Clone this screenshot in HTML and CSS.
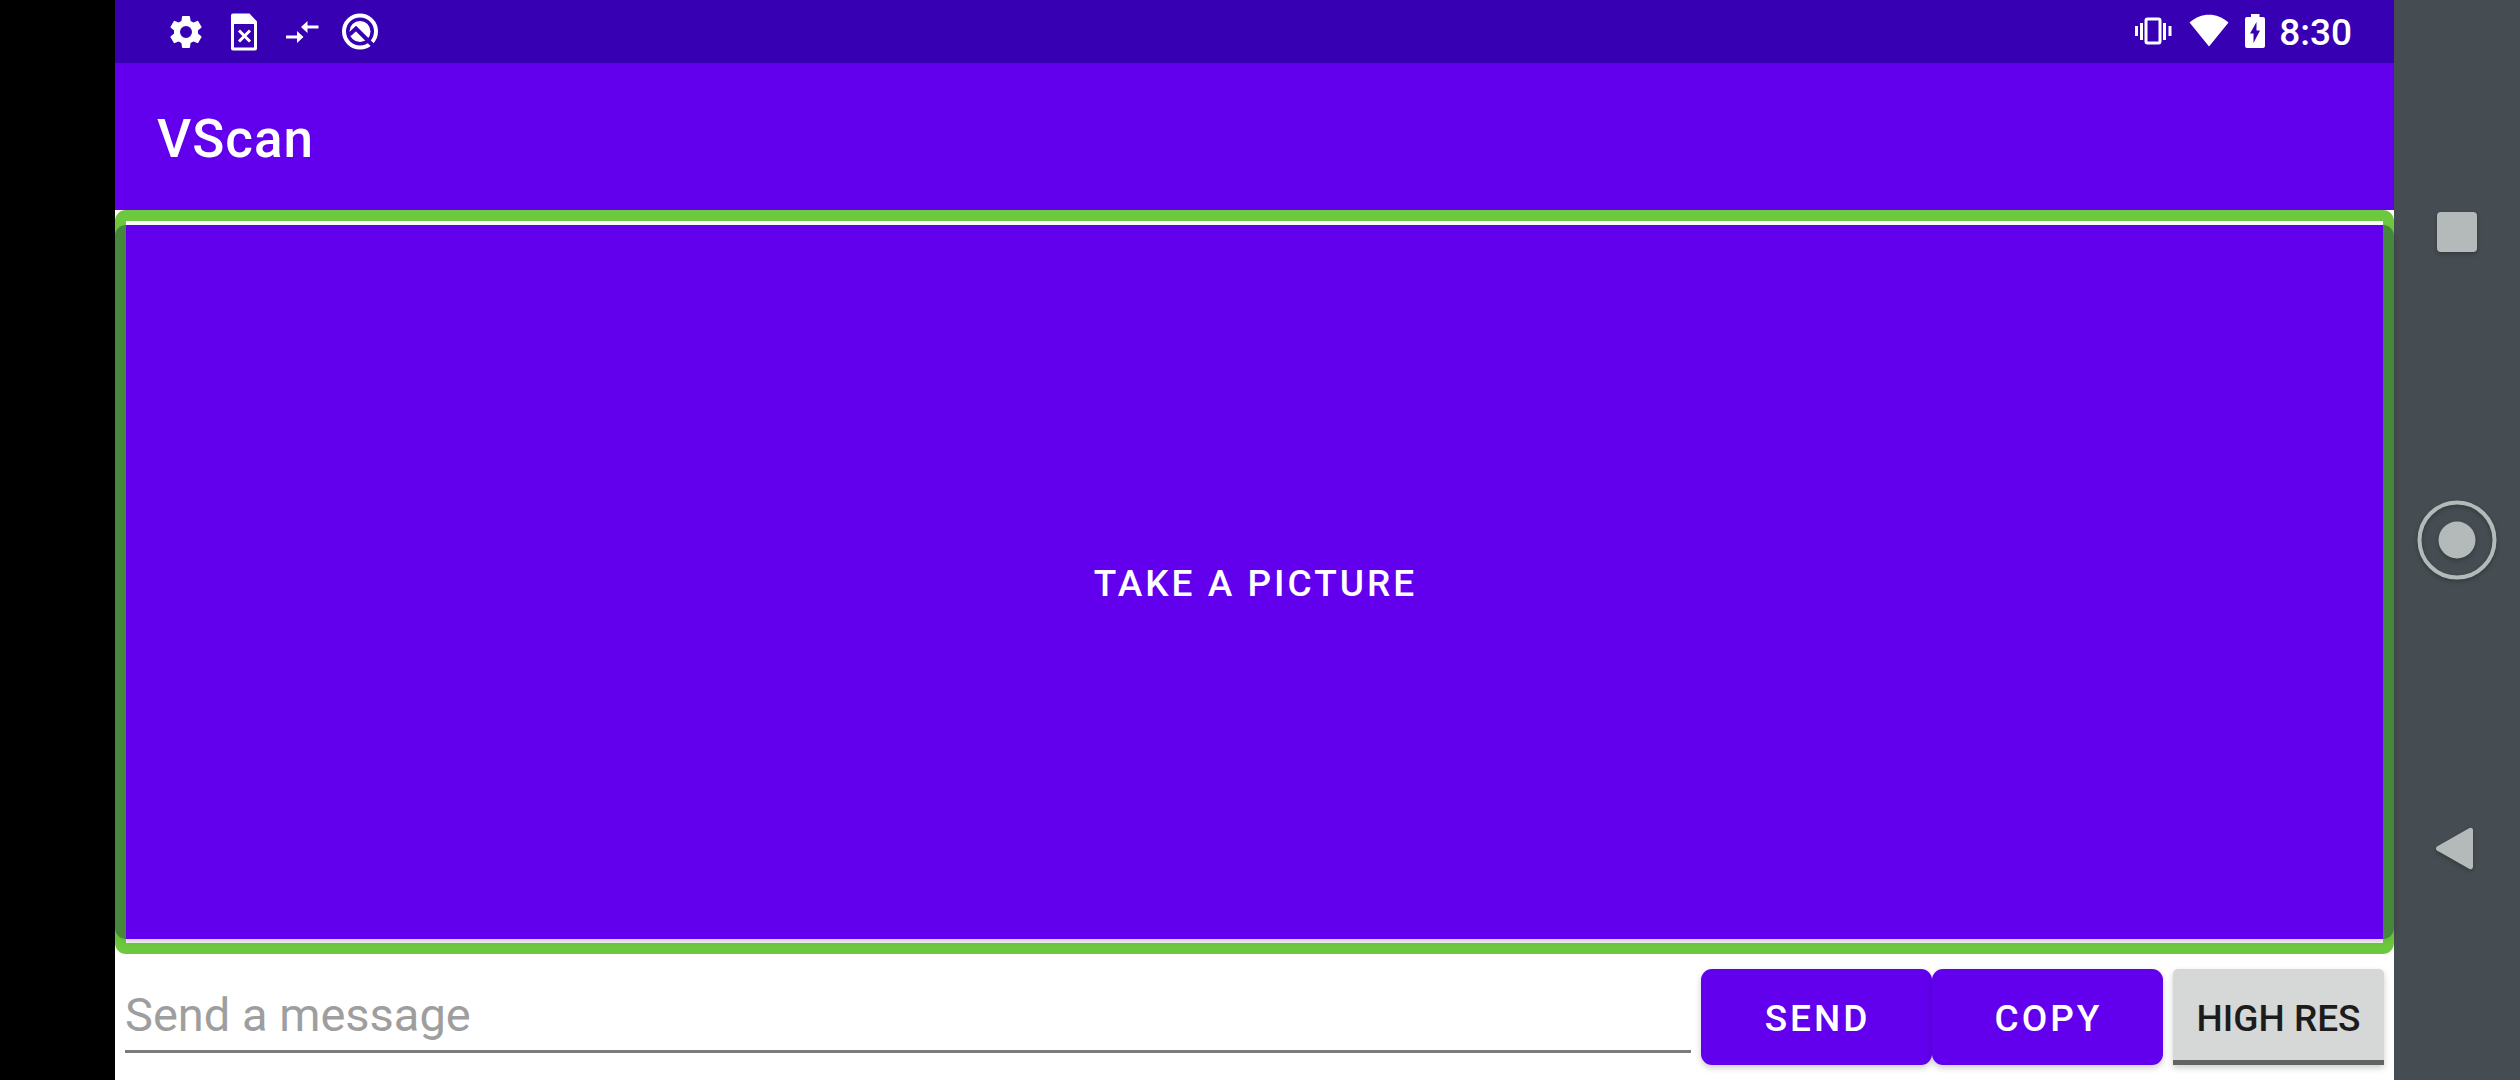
FILE: index.html
```html
<!DOCTYPE html>
<html lang="en">
<head>
<meta charset="utf-8">
<title>VScan</title>
<link rel="stylesheet" href="styles.css">
</head>
<body>
<div class="device">
  <main class="app">
    <div class="status-bar">
      <div class="status-group">
        <svg class="icon" viewBox="0 0 24 24" aria-hidden="true"><path d="M19.14 12.94c.04-.3.06-.61.06-.94s-.02-.64-.07-.94l2.03-1.58a.49.49 0 0 0 .12-.61l-1.92-3.32a.49.49 0 0 0-.59-.22l-2.39.96c-.5-.38-1.03-.7-1.62-.94l-.36-2.54a.48.48 0 0 0-.48-.41h-3.84c-.24 0-.43.17-.47.41l-.36 2.54c-.59.24-1.13.57-1.62.94l-2.39-.96a.48.48 0 0 0-.59.22L2.74 8.87c-.12.21-.08.47.12.61l2.03 1.58c-.05.3-.09.63-.09.94s.02.64.07.94l-2.03 1.58a.49.49 0 0 0-.12.61l1.92 3.32c.12.22.37.29.59.22l2.39-.96c.5.38 1.03.7 1.62.94l.36 2.54c.05.24.24.41.48.41h3.84c.24 0 .44-.17.47-.41l.36-2.54c.59-.24 1.13-.56 1.62-.94l2.39.96c.22.08.47 0 .59-.22l1.92-3.32a.48.48 0 0 0-.12-.61zM12 15.6a3.6 3.6 0 1 1 0-7.2 3.6 3.6 0 0 1 0 7.2z"/></svg>
        <svg class="icon" viewBox="0 0 40 40" aria-hidden="true"><path fill-rule="evenodd" d="M9 1.500h16.500l7.500 8v27a2 2 0 0 1-2 2H9a2 2 0 0 1-2-2v-33a2 2 0 0 1 2-2zM10 12v23.500h20V12z"/><path class="line" d="M15 18.500l11 11M26 18.500l-11 11"/></svg>
        <svg class="icon" viewBox="0 0 40 40" aria-hidden="true"><path d="M4 23.500h11V19l6.500 6-6.500 6v-4.500H4zM36.500 13.500h-11V9L19 15l6.500 6v-4.500h11z"/></svg>
        <svg class="icon" viewBox="0 0 40 40" aria-hidden="true"><circle class="ring" cx="20" cy="19.500" r="16"/><circle cx="20" cy="19.500" r="10.500"/><path class="cut" d="M9.500 22.500l6.500-6 18 18"/></svg>
      </div>
      <div class="status-group status-right">
        <svg class="icon" viewBox="0 0 40 40" aria-hidden="true"><rect class="phone" x="13" y="7" width="14" height="24" rx="1.500"/><path d="M2 14h3v10H2zM7 11h3v17H7zM30 11h3v17h-3zM35.500 14h3v10h-3z"/></svg>
        <svg class="icon wifi" viewBox="0 0 40 40" aria-hidden="true"><path d="M.500 10.500C12 0 28 0 39.500 10.500L20 34.500z"/></svg>
        <svg class="battery" viewBox="0 0 20 40" aria-hidden="true"><path fill-rule="evenodd" d="M6 2h8.500v3H18a2 2 0 0 1 2 2v27a2 2 0 0 1-2 2H2a2 2 0 0 1-2-2V7a2 2 0 0 1 2-2h4zM11.500 10L5 21.500h3.500V31L15 18.500h-3.500z"/></svg>
        <time class="clock">8:30</time>
      </div>
    </div>
    <header class="toolbar"><h1>VScan</h1></header>
    <section class="preview"><button class="button capture" type="button">TAKE A PICTURE</button></section>
    <form class="composer">
      <input class="message" type="text" placeholder="Send a message" aria-label="Send a message">
      <div class="actions">
        <button class="button" type="button">SEND</button>
        <button class="button" type="button">COPY</button>
      </div>
      <button class="toggle" type="button" aria-pressed="false">HIGH RES</button>
    </form>
  </main>
  <nav class="nav-bar" aria-label="System navigation">
    <button type="button" aria-label="Recent apps"><svg viewBox="0 0 84 84" aria-hidden="true"><rect x="22" y="22" width="40" height="40" rx="4"/></svg></button>
    <button type="button" aria-label="Home"><svg viewBox="0 0 84 84" aria-hidden="true"><circle class="home-ring" cx="42" cy="42" r="37.500"/><circle cx="42" cy="42" r="18.500"/></svg></button>
    <button type="button" aria-label="Back"><svg viewBox="0 0 84 84" aria-hidden="true"><path d="M22 40.500a2.500 2.500 0 0 0 0 4L54.500 63a2.500 2.500 0 0 0 3.500-2V24a2.500 2.500 0 0 0-3.500-2z"/></svg></button>
  </nav>
</div>
</body>
</html>
```
FILE: styles.css
```css
* { box-sizing: border-box; }

body {
  margin: 0;
  background: #000;
  font-family: Roboto, sans-serif;
}

button, input {
  margin: 0;
  padding: 0;
  border: 0;
  border-radius: 0;
  font-family: inherit;
}

.device {
  display: flex;
  height: 100vh;
  padding-left: 115px;
}

.app {
  flex: 1;
  min-width: 0;
  display: flex;
  flex-direction: column;
  background: #fff;
}

.status-bar {
  flex: none;
  display: flex;
  align-items: center;
  justify-content: space-between;
  height: 63px;
  padding: 0 42px 0 51px;
  background: #3700b3;
  color: #fff;
}

.status-group {
  display: flex;
  align-items: center;
  gap: 18px;
}

.status-right { gap: 14px; }

.icon, .battery {
  display: block;
  width: 40px;
  height: 40px;
  fill: #fff;
}

.wifi { margin: 0 2px; }

.battery { width: 20px; }

.line, .ring, .phone, .cut {
  fill: none;
  stroke: #fff;
  stroke-width: 3;
}

.ring { stroke-width: 4; }

.cut {
  stroke: #3700b3;
  stroke-width: 4;
}

.clock {
  padding-top: 2px;
  font-size: 37px;
  font-weight: 500;
  line-height: 44px;
}

.toolbar {
  flex: none;
  display: flex;
  align-items: center;
  height: 147px;
  padding: 4px 42px 0;
  background: #6200ee;
  color: #fff;
}

.toolbar h1 {
  margin: 0;
  font-size: 53px;
  font-weight: 500;
  line-height: 62px;
  letter-spacing: 1px;
}

.preview {
  position: relative;
  flex: 1;
  display: flex;
  padding: 15px 0;
}

.preview::after {
  content: "";
  position: absolute;
  inset: 0;
  border: 11px solid rgba(60, 182, 0, 0.75);
  border-radius: 11px;
  pointer-events: none;
}

.button {
  width: 231px;
  height: 96px;
  padding: 2px 0 0 2px;
  border-radius: 11px;
  background: #6200ee;
  box-shadow: 0 3px 6px rgba(0, 0, 0, 0.2);
  color: #fff;
  font-size: 37px;
  font-weight: 500;
  letter-spacing: 3px;
}

.capture {
  width: 100%;
  height: 100%;
}

.composer {
  flex: none;
  display: flex;
  gap: 10px;
  padding: 15px 10px;
}

.message {
  flex: 1;
  min-width: 0;
  height: 84px;
  padding-top: 10px;
  border-bottom: 3px solid #7b7b7b;
  background: transparent;
  color: #212121;
  font-size: 47px;
}

.message::placeholder { color: #9e9e9e; opacity: 1; }

.message:focus { outline: none; border-color: #6200ee; }

.actions { display: flex; }

.toggle {
  width: 211px;
  height: 96px;
  padding-top: 7px;
  border-bottom: 5px solid #626463;
  border-radius: 5px 5px 0 0;
  background: #d6d7d7;
  box-shadow: 0 3px 6px rgba(0, 0, 0, 0.2);
  color: #1c1c1c;
  font-size: 37px;
  font-weight: 500;
}

.nav-bar {
  flex: none;
  display: flex;
  flex-direction: column;
  align-items: center;
  justify-content: space-between;
  width: 126px;
  padding: 190px 0;
  background: #454d52;
}

.nav-bar button { background: none; }

.nav-bar svg {
  display: block;
  width: 84px;
  height: 84px;
  fill: #b4b9ba;
  filter: drop-shadow(0 2px 2px rgba(0, 0, 0, 0.25));
}

.nav-bar .home-ring {
  fill: none;
  stroke: #b4b9ba;
  stroke-width: 4;
}
```
